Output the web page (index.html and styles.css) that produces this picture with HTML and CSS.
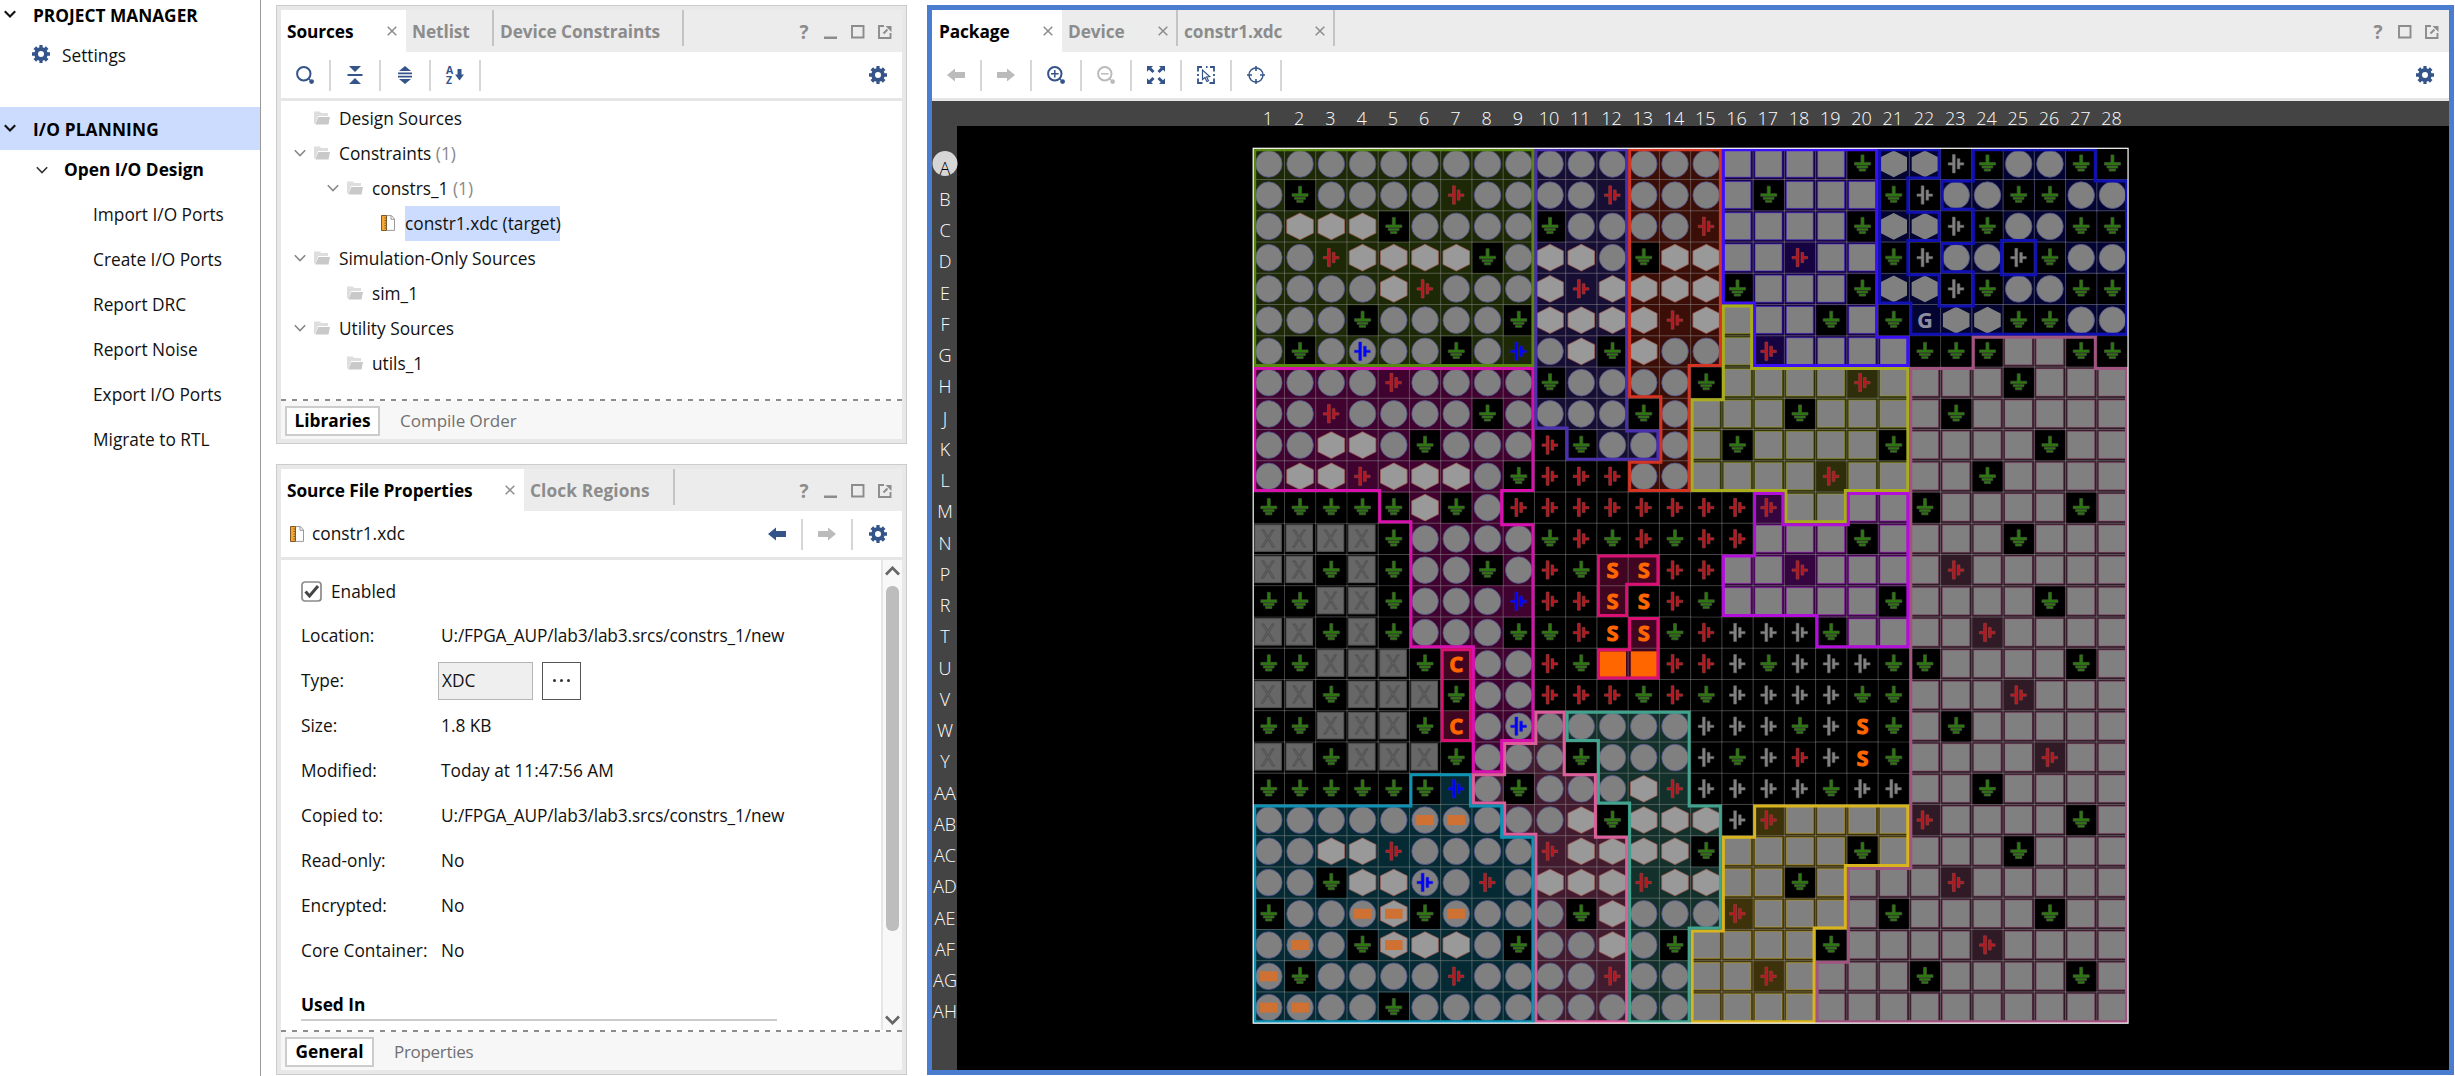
FILE: index.html
```html
<!DOCTYPE html>
<html lang="en">
<head>
<meta charset="utf-8">
<title>I/O Planning</title>
<link rel="stylesheet" href="styles.css">
</head>
<body>
<svg class="sprite" aria-hidden="true">
  <symbol id="gear" viewBox="0 0 18 18"><path fill-rule="evenodd" d="M7.4 0h3.2v2.3l1.6.7 1.7-1.7 2.6 2.6-1.7 1.7.7 1.7H18v3.4h-2.5l-.7 1.7 1.7 1.7-2.6 2.6-1.7-1.7-1.6.7V18H7.4v-2.3L5.800 15l-1.700 1.700-2.600-2.600 1.700-1.700-.7-1.700H0V7.300h2.500l.7-1.700L1.500 3.900l2.600-2.600L5.800 3l1.600-.7zM9 6a3 3 0 1 0 0 6a3 3 0 0 0 0-6z"/></symbol>
  <symbol id="chev" viewBox="0 0 12 8"><path d="M.8 1.200 6 6.500 11.200 1.200" fill="none" stroke="currentColor" stroke-width="var(--sw,1.600)"/></symbol>
  <symbol id="folder" viewBox="0 0 16 14"><path fill="#dedede" d="M0 12.500V.5h6l1 1.500h7v3H4L1.500 12.500z"/><path fill="#c9c9c9" d="M4.300 6H16l-1.500 7.500H1.300z"/></symbol>
  <symbol id="xdc" viewBox="0 0 14 16"><path fill="#fff" stroke="#999" d="M5.500.6h5L13.500 4v11.400h-8z"/><path fill="none" stroke="#999" d="M10 .8V4.300h3.500"/><path fill="#f5a733" stroke="#7d5a28" d="M.5.5h5v15h-5z"/><path stroke="#7d5a28" d="M3.500 3h2M3.500 5.500h2M3.500 8h2M3.500 10.500h2M3.500 13h2"/></symbol>
  <symbol id="close" viewBox="0 0 10 10"><path d="M.7.7l8.600 8.600M9.300.7.7 9.300" stroke="#8c8c8c" stroke-width="1.500"/></symbol>
  <symbol id="min" viewBox="0 0 14 14"><path fill="#8c8c8c" d="M0 11.500h13v2.500H0z"/></symbol>
  <symbol id="max" viewBox="0 0 14 14"><path fill="none" stroke="#8c8c8c" stroke-width="1.900" d="M1 1h11.500v11.500H1z"/></symbol>
  <symbol id="pop" viewBox="0 0 14 14"><path fill="none" stroke="#8c8c8c" stroke-width="1.900" d="M6 1H1v12h11.500V8M5.500 8.500l4-4"/><path fill="#8c8c8c" d="M7.500 1h6v6z"/></symbol>
  <symbol id="search" viewBox="0 0 18 18"><circle cx="7.800" cy="7.800" r="6.700" fill="none" stroke="currentColor" stroke-width="2"/><path d="M12.500 12.500l1.500 1.500" stroke="currentColor" stroke-width="1.500"/><circle cx="15.600" cy="15.600" r="2.400" fill="currentColor"/></symbol>
  <symbol id="collapse" viewBox="0 0 16 18"><path fill="currentColor" d="M2 0h12L8 6zM.5 8h15v2H.5zM8 12l6 6H2z"/></symbol>
  <symbol id="expand" viewBox="0 0 16 18"><path fill="currentColor" d="M8 0l6 5H2zM1 6.500h14v1.700H1zM1 9.800h14v1.700H1zM2 13h12l-6 5z"/></symbol>
  <symbol id="arrow" viewBox="0 0 18 14"><path fill="currentColor" d="M0 7 8 .5V4h10v6H8v3.500z"/></symbol>
  <symbol id="fit" viewBox="0 0 18 18"><path fill="currentColor" d="M0 0h6L4.300 1.800 7.500 5 5.500 7 2 3.800 0 5.800zM18 0h-6l1.700 1.800L10.500 5l2 2L16 3.800l2 2zM0 18h6l-1.700-1.800L7.500 13l-2-2L2 14.200l-2-2zM18 18h-6l1.700-1.800-3.200-3.200 2-2 3.500 3.200 2-2z"/></symbol>
  <symbol id="select" viewBox="0 0 18 18"><path fill="none" stroke="currentColor" stroke-width="1.800" d="M1 5.500V1h4M9 1h1.500M13 1h4v4.500M17 8v2M17 12.500V17h-4.500M1 8v2M1 12.500V17h4.500"/><path fill="#fff" stroke="currentColor" stroke-width="1.200" d="M5.500 4v9.500l2.500-2 1.800 4 1.700-.8-1.800-3.800 3-.4z"/></symbol>
  <symbol id="target" viewBox="0 0 18 18"><circle cx="9" cy="9" r="7" fill="none" stroke="currentColor" stroke-width="1.400"/><path d="M9 0v5M9 13v5M0 9h5M13 9h5" stroke="currentColor" stroke-width="1.600"/></symbol>
</svg>

<div class="app">
  <nav class="flow">
    <div class="flow-head"><svg class="chev bold"><use href="#chev"/></svg><b>PROJECT MANAGER</b></div>
    <div class="flow-settings"><svg class="gear"><use href="#gear"/></svg><span>Settings</span></div>
    <div class="flow-head active"><svg class="chev bold"><use href="#chev"/></svg><b>I/O PLANNING</b></div>
    <div class="flow-sub"><svg class="chev"><use href="#chev"/></svg><b>Open I/O Design</b></div>
    <a>Import I/O Ports</a><a>Create I/O Ports</a><a>Report DRC</a><a>Report Noise</a><a>Export I/O Ports</a><a>Migrate to RTL</a>
  </nav>

  <div class="middle">
    <section class="panel sources">
      <header class="tabs">
        <div class="tab on t-sources"><b>Sources</b><svg class="x"><use href="#close"/></svg></div>
        <div class="tab t-netlist"><b>Netlist</b></div>
        <div class="tab t-devcon"><b>Device Constraints</b></div>
        <div class="win"><i>?</i><svg><use href="#min"/></svg><svg><use href="#max"/></svg><svg><use href="#pop"/></svg></div>
      </header>
      <div class="tools">
        <span class="tool"><svg class="i18"><use href="#search"/></svg></span>
        <span class="tool"><svg class="i16"><use href="#collapse"/></svg></span>
        <span class="tool"><svg class="i16"><use href="#expand"/></svg></span>
        <span class="tool"><span class="sort"><span class="az"><b>A</b><b>Z</b></span><svg class="down" viewBox="0 0 9 12"><path fill="currentColor" d="M2.500 0h4v5.500H9L4.500 11.500 0 5.500h2.500z"/></svg></span></span>
        <span class="tool last"><svg class="gear"><use href="#gear"/></svg></span>
      </div>
      <div class="tree">
        <div class="node d0"><svg class="chev off"><use href="#chev"/></svg><svg class="folder"><use href="#folder"/></svg><span>Design Sources</span></div>
        <div class="node d0"><svg class="chev"><use href="#chev"/></svg><svg class="folder"><use href="#folder"/></svg><span>Constraints <em>(1)</em></span></div>
        <div class="node d1"><svg class="chev"><use href="#chev"/></svg><svg class="folder"><use href="#folder"/></svg><span>constrs_1 <em>(1)</em></span></div>
        <div class="node d2"><svg class="chev off"><use href="#chev"/></svg><svg class="file"><use href="#xdc"/></svg><span class="sel">constr1.xdc (target)</span></div>
        <div class="node d0"><svg class="chev"><use href="#chev"/></svg><svg class="folder"><use href="#folder"/></svg><span>Simulation-Only Sources</span></div>
        <div class="node d1"><svg class="chev off"><use href="#chev"/></svg><svg class="folder"><use href="#folder"/></svg><span>sim_1</span></div>
        <div class="node d0"><svg class="chev"><use href="#chev"/></svg><svg class="folder"><use href="#folder"/></svg><span>Utility Sources</span></div>
        <div class="node d1"><svg class="chev off"><use href="#chev"/></svg><svg class="folder"><use href="#folder"/></svg><span>utils_1</span></div>
      </div>
      <footer class="foot"><b class="lib">Libraries</b><span>Compile Order</span></footer>
    </section>

    <section class="panel props">
      <header class="tabs">
        <div class="tab on t-props"><b>Source File Properties</b><svg class="x"><use href="#close"/></svg></div>
        <div class="tab t-clock"><b>Clock Regions</b></div>
        <div class="win"><i>?</i><svg><use href="#min"/></svg><svg><use href="#max"/></svg><svg><use href="#pop"/></svg></div>
      </header>
      <div class="tools">
        <span class="fname"><svg class="file"><use href="#xdc"/></svg>constr1.xdc</span>
        <span class="tool"><svg class="arrow"><use href="#arrow"/></svg></span>
        <span class="tool"><svg class="arrow flip dim"><use href="#arrow"/></svg></span>
        <span class="tool"><svg class="gear"><use href="#gear"/></svg></span>
      </div>
      <div class="body">
        <div class="form">
          <label class="check"><svg viewBox="0 0 21 21"><rect x="1" y="1" width="19" height="19" rx="3" fill="#fff" stroke="#8a8a8a" stroke-width="1.700"/><path d="M4.500 10.500l4 4.500 8.500-10" fill="none" stroke="#444" stroke-width="3"/></svg>Enabled</label>
          <div class="row"><span>Location:</span><span class="path">U:/FPGA_AUP/lab3/lab3.srcs/constrs_1/new</span></div>
          <div class="row"><span>Type:</span><span class="field">XDC</span><span class="more"><i></i><i></i><i></i></span></div>
          <div class="row"><span>Size:</span><span>1.8 KB</span></div>
          <div class="row"><span>Modified:</span><span>Today at 11:47:56 AM</span></div>
          <div class="row"><span>Copied to:</span><span class="path">U:/FPGA_AUP/lab3/lab3.srcs/constrs_1/new</span></div>
          <div class="row"><span>Read-only:</span><span>No</span></div>
          <div class="row"><span>Encrypted:</span><span>No</span></div>
          <div class="row"><span>Core Container:</span><span>No</span></div>
          <div class="used"><b>Used In</b></div>
        </div>
        <div class="scroll"><svg class="chev up"><use href="#chev"/></svg><div class="thumb"></div><svg class="chev"><use href="#chev"/></svg></div>
      </div>
      <footer class="foot"><b class="gen">General</b><span>Properties</span></footer>
    </section>
  </div>

  <section class="package">
    <header class="tabs">
      <div class="tab on t-package"><b>Package</b><svg class="x"><use href="#close"/></svg></div>
      <div class="tab t-device"><b>Device</b><svg class="x"><use href="#close"/></svg></div>
      <div class="tab t-xdc"><b>constr1.xdc</b><svg class="x"><use href="#close"/></svg></div>
      <div class="win"><i>?</i><svg><use href="#max"/></svg><svg><use href="#pop"/></svg></div>
    </header>
    <div class="tools">
      <span class="tool"><svg class="arrow dim"><use href="#arrow"/></svg></span>
      <span class="tool"><svg class="arrow flip dim"><use href="#arrow"/></svg></span>
      <span class="tool"><svg class="i18" viewBox="0 0 18 18"><use href="#search"/><path d="M4 7.800h7.600M7.800 4v7.600" stroke="currentColor" stroke-width="1.500"/></svg></span>
      <span class="tool"><svg class="i18 dim" viewBox="0 0 18 18"><use href="#search"/><path d="M4 7.800h7.600" stroke="currentColor" stroke-width="1.500"/></svg></span>
      <span class="tool"><svg class="i18"><use href="#fit"/></svg></span>
      <span class="tool"><svg class="i18"><use href="#select"/></svg></span>
      <span class="tool"><svg class="i18"><use href="#target"/></svg></span>
      <span class="tool last"><svg class="gear"><use href="#gear"/></svg></span>
    </div>
    <svg class="canvas" id="canvas" viewBox="932 101 1517 969"></svg>
  </section>
</div>
<script src="package.js"></script>
</body>
</html>
```
FILE: styles.css
```css
* { box-sizing: border-box; }
body {
  margin: 0;
  background: #fff;
  color: #111;
  font-family: "Open Sans", "Noto Sans", sans-serif;
  font-size: 17.3px;
  line-height: 24px;
  white-space: nowrap;
  overflow: hidden;
}
svg { display: block; flex: none; }
.sprite { position: absolute; width: 0; height: 0; }
em, i { font-style: normal; }

.app { display: flex; width: 2455px; height: 1076px; }

/* Flow navigator */
.flow { width: 261px; border-right: 1px solid #999; display: flex; flex-direction: column; color: #111; }
.flow b { color: #000; }
.flow-head { height: 32px; display: flex; align-items: center; padding-left: 4px; gap: 17px; }
.flow-head.active { height: 43px; background: #cbdcff; margin-top: 32px; padding-top: 2px; letter-spacing: .15px; }
.flow-head .chev { --sw: 2.100; margin-top: -4px; }
.flow-settings { height: 43px; display: flex; align-items: center; padding-left: 32px; gap: 12px; padding-top: 5px; }
.flow-settings .gear { margin-top: -4px; }
.flow-sub { height: 42px; display: flex; align-items: center; padding: 0 0 2px 36px; gap: 16px; color: #333; }
.flow a { height: 45px; line-height: 46px; padding-left: 93px; }

.chev { width: 12px; height: 8px; }
.gear { width: 18px; height: 18px; fill: #34548a; }
.i18 { width: 18px; height: 18px; }
.i16 { width: 16px; height: 18px; }
.arrow { width: 18px; height: 14px; }
.flip { transform: scaleX(-1); }
.dim { color: #bbb; }
.file { width: 14px; height: 16px; }
.sort { display: flex; align-items: center; gap: 2px; }
.az { display: flex; flex-direction: column; font-size: 10.500px; line-height: 10px; }
.down { width: 9px; height: 12px; }

/* Docked panels */
.middle { width: 631px; margin-left: 15px; padding-top: 5px; display: flex; flex-direction: column; gap: 20px; }
.panel { border: 1px solid #ccc; box-shadow: inset 0 0 0 4px #e8e8e8; padding: 4px; display: flex; flex-direction: column; }
.sources { height: 439px; }
.props { height: 611px; }

.tabs { height: 42px; background: #ececec; display: flex; flex: none; letter-spacing: -.1px; }
.tab { display: flex; align-items: center; position: relative; padding-left: 6px; height: 36px; padding-top: 7px; color: #8c8c8c; border-right: 2px solid #c4c4c4; }
.tab.on { background: #fff; height: 42px; color: #000; border-right: 0; padding-top: 1px; }
.tab .x { width: 10px; height: 10px; position: absolute; right: 9px; top: 16px; }
.t-sources { width: 125px; }
.t-netlist { width: 88px; }
.t-devcon { width: 190px; }
.t-props { width: 243px; }
.t-clock { width: 151px; letter-spacing: .1px; }
.t-package { width: 130px; padding-left: 7px; }
.t-device { width: 116px; }
.t-xdc { width: 157px; }
.tab.t-device .x, .tab.t-xdc .x { right: 8px; }
.win { margin-left: auto; display: flex; align-items: center; gap: 13px; padding: 2px 10px 0 0; color: #8c8c8c; }
.win i { font: bold 19px "Open Sans", sans-serif; width: 14px; text-align: center; }
.win svg { width: 14px; height: 14px; }

.tools { height: 49px; flex: none; display: flex; border-bottom: 3px solid #e6e6e6; color: #34548a; align-items: center; }
.tool { width: 50px; height: 31px; display: flex; align-items: center; justify-content: center; border-right: 2px solid #d6d6d6; }
.tools > .tool:last-child { border: 0; width: 49px; }
.tool.last { margin-left: auto; }
.fname { display: flex; align-items: center; gap: 8px; padding-left: 9px; margin-right: auto; color: #111; }

.tree { flex: 1; color: #111; }
.node { height: 35px; display: flex; align-items: center; }
.node .chev { color: #888; margin-right: 8px; margin-top: -2px; }
.node .off { visibility: hidden; }
.node .folder { width: 16px; height: 14px; margin-right: 9px; margin-top: -2px; }
.node .file { margin: -2px 10px 0 1px; }
.node em { color: #888; }
.d0 { padding-left: 13px; }
.d1 { padding-left: 46px; }
.d2 { padding-left: 79px; }
.sel { background: #cbdcff; line-height: 35px; width: 155px; }

.foot { height: 40px; flex: none; background: repeating-linear-gradient(90deg, #8c8c8c 0 5px, #fff 5px 11px) 0 0 / 100% 2px no-repeat #f7f7f7; display: flex; align-items: center; color: #707070; padding: 3px 0 0 4px; gap: 20px; }
.foot span { font-size: 17px; }
.foot b { border: 2px solid #ccc; background: #fff; color: #000; height: 30px; line-height: 26px; text-align: center; }
.lib { width: 95px; }
.gen { width: 89px; }
.gen + span { letter-spacing: -.3px; }

.body { flex: 1; display: flex; }
.form { flex: 1; padding: 11px 0 0 20px; }
.check { height: 42px; display: flex; align-items: center; gap: 9px; }
.check svg { width: 21px; height: 21px; margin-top: -2px; }
.row { height: 45px; display: flex; align-items: center; }
.row span:first-child { width: 140px; }
.row .path { letter-spacing: -.13px; }
.row .field { width: 95px; height: 38px; line-height: 36px; border: 1px solid #b5b5b5; background: #efefef; padding-left: 3px; margin-left: -3px; }
.more { width: 39px; height: 38px; margin-left: 9px; border: 1px solid #555; display: flex; align-items: center; justify-content: center; gap: 4px; }
.more i { width: 3px; height: 3px; border-radius: 50%; background: #333; }
.used { width: 476px; height: 48px; border-bottom: 2px solid #ccc; padding-top: 20px; color: #000; }
.scroll { width: 21px; border-left: 2px solid #e6e6e6; background: #f8f8f8; display: flex; flex-direction: column; align-items: center; padding: 6px 0 5px; color: #666; }
.scroll .chev { width: 15px; height: 10px; --sw: 2.200; }
.scroll .up { transform: scaleY(-1); }
.thumb { width: 13px; height: 345px; border-radius: 6px; background: #bdbdbd; margin: 10px 0 auto; }

/* Package view */
.package { width: 1527px; height: 1070px; margin: 5px 0 0 20px; border: 5px solid #4a7dcf; display: flex; flex-direction: column; }
.canvas { width: 1517px; height: 969px; background: #000; }
.label { font: 300 18px "Open Sans", sans-serif; fill: #fff; text-anchor: middle; }
.letter { font: bold 22px "Open Sans", sans-serif; fill: #ff6600; stroke: #ff6600; stroke-width: .9; text-anchor: middle; }
.letter.G { fill: #8c8ca0; stroke: none; }
.nc { font: 23px "Open Sans", sans-serif; fill: #646464; stroke: #505050; stroke-width: .8; text-anchor: middle; }
```
FILE: package.js
```js
// Ball grid of the package: one character per pin, grouped by column block.
// o ball, h/d hexagon, s square, x no-connect, g ground, r/w/b supply,
// c ball with supply, O/H ball or hexagon with a placed port, R filled, S/C/G letter
const pins = {
  A: 'ooooooooo ooo ooo ssssg ddwgoogg',
  B: 'ogooooroo oor ooo sgsss gwooggoo',
  C: 'ohhhgoooo goo oor ssssg ddwgoogg',
  D: 'oorhhhhgo hho ghh ssrss gwoowgoo',
  E: 'oooohrooo hrh hhh gsssg ddwgoogg',
  F: 'ooogoooog hhh hrh sssgs gGddggoo',
  G: 'ogocoogob ohg hoo srsss sgggssgg',
  H: 'ooooroooo goo oog ssssr ssssgsss',
  J: 'ooroooogo ooo gos ssgss ssgsssss',
  K: 'oohhogooo rgo oos gssss gssssgss',
  L: 'ohhrhhhog rrr oos sssrs sssgssss',
  M: 'ggggghgor rrr rrr rrsss sgssssgs',
  N: 'xxxxgoooo grg rgr rsssg ssssgsss',
  P: 'xxgxgoogo rgS Srr ssrss ssrsssss',
  R: 'ggxxgooob rrS Srg sssss gssssgss',
  T: 'xxgxgooog grS Sgr wwwgs sssrssss',
  U: 'ggxxxgCoo rgR Rrr wgwww ggssssgs',
  V: 'xxgxxxgoo rrr grg wwwwg gsssrsss',
  W: 'ggxxxgCoc ooo oow wwgwS gsgsssss',
  Y: 'xxgxxxgoo ogo oow gwrwS gssssrss',
  AA: 'ggggggbog ooo hrw wwwgw wssgssss',
  AB: 'oooooOOoo ohg hhh wrsss srssssgs',
  AC: 'oohhroooo rhh hhg ssssg ssssgsss',
  AD: 'ooghhcoro hhh rhh ssgss ssrsssss',
  AE: 'gooOHgOoo ogh ooo rssss gssssgss',
  AF: 'oOogHhhog ooh ogs sssgs sssrssss',
  AG: 'Ogooooroo oor oos srsss sgssssgs',
  AH: 'OOoogoooo ooo oos sssss ssssssss'
};
const rows = Object.keys(pins);

// Banks: fill, outline, and "row range, first column, last column" runs
const banks = [
  ['#1c2806', '#588810', ['A-G 1 9']],
  ['#400330', '#d810ae', ['H-L 1 9', 'M-M 5 8', 'N-T 6 9', 'U-W 8 9', 'Y-Y 8 8']],
  ['#170f33', '#4a2fae', ['A-J 10 12', 'K-K 11 13']],
  ['#3b0f08', '#d43422', ['A-G 13 15', 'H-H 13 14', 'J-K 14 14', 'L-L 13 14']],
  ['#160342', '#3c10f5', ['A-E 16 20', 'F-F 17 20', 'G-G 17 21']],
  ['#040433', '#1010b4', ['A-A 21 22', 'A-A 24 27', 'B-B 21 21', 'B-B 23 28', 'C-C 21 22', 'C-C 24 28', 'D-D 21 21', 'D-D 23 24', 'D-D 26 28', 'E-E 21 22', 'E-E 24 28', 'F-F 22 28']],
  ['#2e2f0a', '#a9ad1c', ['F-G 16 16', 'H-H 16 21', 'J-L 15 21', 'M-M 18 19']],
  ['#350540', '#b210d8', ['M-M 17 17', 'M-M 20 21', 'N-N 17 21', 'P-R 16 21', 'T-T 19 21']],
  ['#301a26', '#a05480', ['G-G 24 27', 'H-AC 22 28', 'AD-AF 20 28', 'AG-AH 19 28']],
  ['#3d320a', '#d8b41e', ['AB-AB 17 21', 'AC-AC 16 21', 'AD-AE 16 19', 'AF-AH 15 18']],
  ['#14302a', '#40a48e', ['W-W 11 14', 'Y-AA 12 14', 'AB-AE 13 15', 'AF-AH 13 14']],
  ['#421b2f', '#dc5f9c', ['W-W 10 10', 'Y-Y 9 10', 'AA-AA 8 11', 'AB-AB 9 11', 'AC-AH 10 12']],
  ['#052a33', '#1092b4', ['AA-AA 6 7', 'AB-AB 1 8', 'AC-AH 1 9']],
  ['#400520', '#dc1074', ['U-W 7 7', 'P-P 12 13', 'R-R 12 12', 'T-T 13 13', 'U-U 12 13']]
];

const P = 31.245, X0 = 1253.2, Y0 = 148.300, N = 28;
const bank = rows.map(() => Array(N).fill(-1));
banks.forEach(([, , runs], k) => runs.forEach(run => {
  const [span, a, b] = run.split(' ');
  const [from, to] = span.split('-').map(r => rows.indexOf(r));
  for (let r = from; r <= to; r++) for (let c = a - 1; c < b; c++) bank[r][c] = k;
}));

const rect = (x, y, w, h, extra) => `<rect x="${x}" y="${y}" width="${w}" height="${h}" ${extra}/>`;
const ball = '<circle r="13.300" fill="#808080" stroke="#50508c" stroke-width=".8"/>';
const hexPath = 'M0-13.300 13.300-6.700V6.700L0 13.300-13.300 6.700V-6.700z';
const hex = `<path d="${hexPath}" fill="#999" stroke="#a06058" stroke-width=".8"/>`;
const port = rect(-8.800, -5, 17.600, 10, 'fill="#cf7132"');
const ground = rect(-14.800, -14.800, 29.900, 29.900, 'fill="#000"') +
  '<path d="M-1.500-9H1.500V-1.500H8V1.200H-8V-1.500H-1.500zM-5.500 2H5.300V4.200H-5.500zM-3.300 5H3.100V7.200H-3.300z" fill="#2b7a0c" stroke="#46583c" stroke-width=".7"/>';
const supply = (f, s) => `<path d="M-3.800-9.300H-1V9H-3.800V1.200H-8V-1.200H-3.800zM1-5.200H3.700V-1.200H7.600V1.200H3.700V5H1z" fill="${f}" stroke="${s}" stroke-width=".6"/>`;
const letter = ch => `<text class="letter ${ch}" y="8">${ch}</text>`;
const glyph = (ch, stroke) => ({
  o: ball, h: hex, g: ground,
  d: `<path d="${hexPath}" fill="#808080"/>`,
  s: rect(-13.700, -13.700, 27, 27, `fill="#808080" stroke="${stroke}" stroke-width="1.200" stroke-opacity=".4"`),
  x: rect(-14, -14, 26.500, 26.500, 'fill="#676767" stroke="#525252"') + '<text class="nc" x="-1" y="8">X</text>',
  r: supply('#b8161e', '#904848'), w: supply('#848484', '#666'), b: supply('#00f', '#2020c8'),
  c: ball + supply('#00f', '#2020c8'), O: ball + port, H: hex + port,
  R: rect(-13, -12.500, 26.500, 25.500, 'fill="#ff6600"')
}[ch] || letter(ch));

let cells = '', grid = '', marks = '', outlines = '', clips = '', labels = '';
banks.forEach(([fill, line], k) => {
  let area = '', edge = '';
  bank.forEach((row, r) => row.forEach((v, c) => {
    if (v !== k) return;
    const x = X0 + c * P, y = Y0 + r * P;
    area += `M${x} ${y}h${P}v${P}h${-P}z`;
    const out = (dr, dc) => (bank[r + dr] || [])[c + dc] !== k;
    if (out(-1, 0)) edge += `M${x} ${y}h${P}`;
    if (out(1, 0)) edge += `M${x} ${y + P}h${P}`;
    if (out(0, -1)) edge += `M${x} ${y}v${P}`;
    if (out(0, 1)) edge += `M${x + P} ${y}v${P}`;
  }));
  clips += `<clipPath id="bank${k}"><path d="${area}"/></clipPath>`;
  cells += `<path d="${area}" fill="${fill}"/>`;
  outlines += `<path d="${edge}" clip-path="url(#bank${k})" stroke="${line}" stroke-width="6" stroke-linecap="square" fill="none"/>`;
});
for (let i = 1; i < N; i++) {
  grid += `M${X0 + i * P} ${Y0}v${N * P}M${X0} ${Y0 + i * P}h${N * P}`;
}
rows.forEach((name, r) => {
  const cy = Y0 + (r + .5) * P;
  [...pins[name].replace(/ /g, '')].forEach((ch, c) => {
    const k = bank[r][c];
    marks += `<g transform="translate(${(X0 + (c + .5) * P).toFixed(2)} ${cy.toFixed(2)})">${glyph(ch, k < 0 ? '#555' : banks[k][1])}</g>`;
  });
  if (r === 0) labels += '<circle cx="945" cy="163.500" r="12.500" fill="#d6d6d6"/>';
  labels += `<text class="label" x="945" y="${cy + 10.700}" ${r ? '' : 'style="fill:#000"'}>${name}</text>`;
});
for (let c = 0; c < N; c++) labels += `<text class="label" x="${X0 + (c + .5) * P - 1}" y="125">${c + 1}</text>`;

document.getElementById('canvas').innerHTML =
  `<defs>${clips}</defs>` +
  rect(932, 101, 1517, 25, 'fill="#444"') + rect(932, 101, 25, 969, 'fill="#444"') +
  cells + `<path d="${grid}" stroke="#999" stroke-opacity=".45"/>` + marks + outlines +
  rect(X0, Y0, N * P, N * P, 'fill="none" stroke="#fff" stroke-width="1.200"') + labels;
```
